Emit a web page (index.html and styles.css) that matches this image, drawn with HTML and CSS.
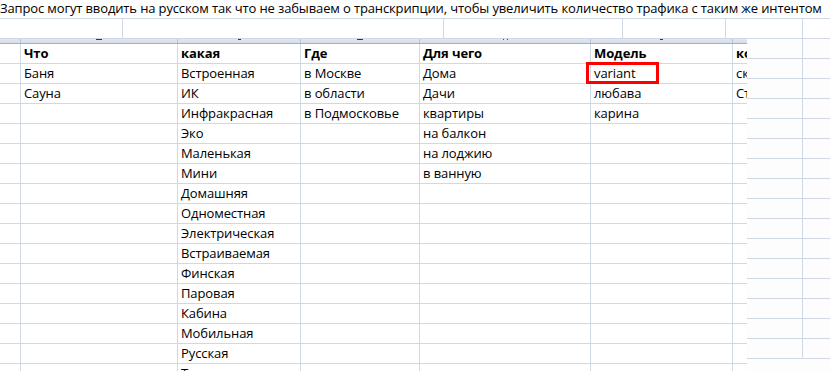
FILE: index.html
```html
<!DOCTYPE html>
<html lang="ru">
<head>
<meta charset="utf-8">
<link rel="stylesheet" href="styles.css">
</head>
<body>
<div class="title">Запрос могут вводить на русском так что не забываем о транскрипции, чтобы увеличить количество трафика с таким же интентом</div>
<div class="toprow">
  <div class="tc"></div><div class="tc"></div><div class="tc"></div><div class="tc"></div><div class="tc"></div><div class="tc"></div>
</div>
<div class="lower">
  <div class="main">
    <div class="strip">
      <div class="sc"></div>
      <div class="sc"><span class="tick"></span></div>
      <div class="sc"><span class="tick small"></span></div>
      <div class="sc"><span class="tick"></span></div>
      <div class="sc"><span class="tick dots"></span></div>
      <div class="sc"><span class="tick small"></span></div>
      <div class="sc"></div>
    </div>
    <div class="grid">
      <div class="c"></div><div class="c b">Что</div><div class="c b">какая</div><div class="c b">Где</div><div class="c b">Для чего</div><div class="c b">Модель</div><div class="c b">ко</div>
      <div class="c"></div><div class="c">Баня</div><div class="c">Встроенная</div><div class="c">в Москве</div><div class="c">Дома</div><div class="c marked">variant</div><div class="c">ск</div>
      <div class="c"></div><div class="c">Сауна</div><div class="c">ИК</div><div class="c">в области</div><div class="c">Дачи</div><div class="c">любава</div><div class="c">Ст</div>
      <div class="c"></div><div class="c"></div><div class="c">Инфракрасная</div><div class="c">в Подмосковье</div><div class="c">квартиры</div><div class="c">карина</div><div class="c"></div>
      <div class="c"></div><div class="c"></div><div class="c">Эко</div><div class="c"></div><div class="c">на балкон</div><div class="c"></div><div class="c"></div>
      <div class="c"></div><div class="c"></div><div class="c">Маленькая</div><div class="c"></div><div class="c">на лоджию</div><div class="c"></div><div class="c"></div>
      <div class="c"></div><div class="c"></div><div class="c">Мини</div><div class="c"></div><div class="c">в ванную</div><div class="c"></div><div class="c"></div>
      <div class="c"></div><div class="c"></div><div class="c">Домашняя</div><div class="c"></div><div class="c"></div><div class="c"></div><div class="c"></div>
      <div class="c"></div><div class="c"></div><div class="c">Одноместная</div><div class="c"></div><div class="c"></div><div class="c"></div><div class="c"></div>
      <div class="c"></div><div class="c"></div><div class="c">Электрическая</div><div class="c"></div><div class="c"></div><div class="c"></div><div class="c"></div>
      <div class="c"></div><div class="c"></div><div class="c">Встраиваемая</div><div class="c"></div><div class="c"></div><div class="c"></div><div class="c"></div>
      <div class="c"></div><div class="c"></div><div class="c">Финская</div><div class="c"></div><div class="c"></div><div class="c"></div><div class="c"></div>
      <div class="c"></div><div class="c"></div><div class="c">Паровая</div><div class="c"></div><div class="c"></div><div class="c"></div><div class="c"></div>
      <div class="c"></div><div class="c"></div><div class="c">Кабина</div><div class="c"></div><div class="c"></div><div class="c"></div><div class="c"></div>
      <div class="c"></div><div class="c"></div><div class="c">Мобильная</div><div class="c"></div><div class="c"></div><div class="c"></div><div class="c"></div>
      <div class="c"></div><div class="c"></div><div class="c">Русская</div><div class="c"></div><div class="c"></div><div class="c"></div><div class="c"></div>
      <div class="c"></div><div class="c"></div><div class="c">Турецкая</div><div class="c"></div><div class="c"></div><div class="c"></div><div class="c"></div>
    </div>
  </div>
  <div class="side">
    <div class="s"></div><div class="s"></div>
    <div class="s"></div><div class="s"></div>
    <div class="s"></div><div class="s"></div>
    <div class="s"></div><div class="s"></div>
    <div class="s"></div><div class="s"></div>
    <div class="s"></div><div class="s"></div>
    <div class="s"></div><div class="s"></div>
    <div class="s"></div><div class="s"></div>
    <div class="s"></div><div class="s"></div>
    <div class="s"></div><div class="s"></div>
    <div class="s"></div><div class="s"></div>
    <div class="s"></div><div class="s"></div>
    <div class="s"></div><div class="s"></div>
    <div class="s"></div><div class="s"></div>
    <div class="s"></div><div class="s"></div>
    <div class="s"></div><div class="s"></div>
  </div>
</div>
</body>
</html>
```
FILE: styles.css
```css
html, body {
  margin: 0;
  padding: 0;
  background: #ffffff;
}
body {
  width: 830px;
  height: 371px;
  overflow: hidden;
  font-family: "Open Sans", "Noto Sans", sans-serif;
  font-size: 13px;
  color: #000;
}
.title {
  height: 18px;
  line-height: 17px;
  white-space: nowrap;
  overflow: hidden;
  letter-spacing: -0.13px;
}
.toprow {
  display: grid;
  grid-template-columns: 122px 321px 179px 103px 77px 28px;
  height: 21px;
  box-sizing: border-box;
  border-top: 1px solid #d0d7e5;
  border-bottom: 1px solid #d0d7e5;
}
.tc + .tc {
  border-left: 1px solid #d0d7e5;
}
.lower {
  display: flex;
}
.main {
  width: 747px;
  flex: none;
}
.strip {
  display: grid;
  grid-template-columns: 21px 157px 123px 119px 171px 142px 14px;
  height: 5px;
  box-sizing: border-box;
  background: linear-gradient(#e3e8ef, #d6dde8);
  border-bottom: 1px solid #9fb1c8;
}
.sc {
  display: flex;
  justify-content: center;
  align-items: flex-start;
  border-right: 1px solid #b8c6d8;
}
.sc:last-child {
  border-right: none;
}
.tick {
  display: block;
  width: 6px;
  height: 1px;
  background: #2a3a4a;
}
.tick.small {
  width: 3px;
}
.tick.dots {
  width: 5px;
  background: linear-gradient(90deg, #6a4a20 0 1px, transparent 1px 4px, #1f5fa0 4px 5px);
}
.grid {
  display: grid;
  grid-template-columns: 21px 157px 123px 119px 171px 142px 14px;
  grid-auto-rows: 20px;
}
.c {
  box-sizing: border-box;
  border-right: 1px solid #d0d7e5;
  border-bottom: 1px solid #d0d7e5;
  padding-left: 3px;
  line-height: 19px;
  white-space: nowrap;
  overflow: hidden;
  letter-spacing: -0.1px;
}
.c:nth-child(7n) {
  border-right: none;
}
.b {
  font-weight: 700;
}
.marked {
  position: relative;
  overflow: visible;
}
.marked::after {
  content: "";
  position: absolute;
  left: -5px;
  top: -2px;
  width: 73px;
  height: 22px;
  box-sizing: border-box;
  border: 3px solid #ff0000;
}
.side {
  width: 83px;
  flex: none;
  display: grid;
  grid-template-columns: 55px 28px;
  grid-auto-rows: 20px;
  background: #fdfdfe;
}
.s {
  box-sizing: border-box;
  border-bottom: 1px solid #d0d7e5;
}
.s:nth-child(2n) {
  border-left: 1px solid #d0d7e5;
}
```
